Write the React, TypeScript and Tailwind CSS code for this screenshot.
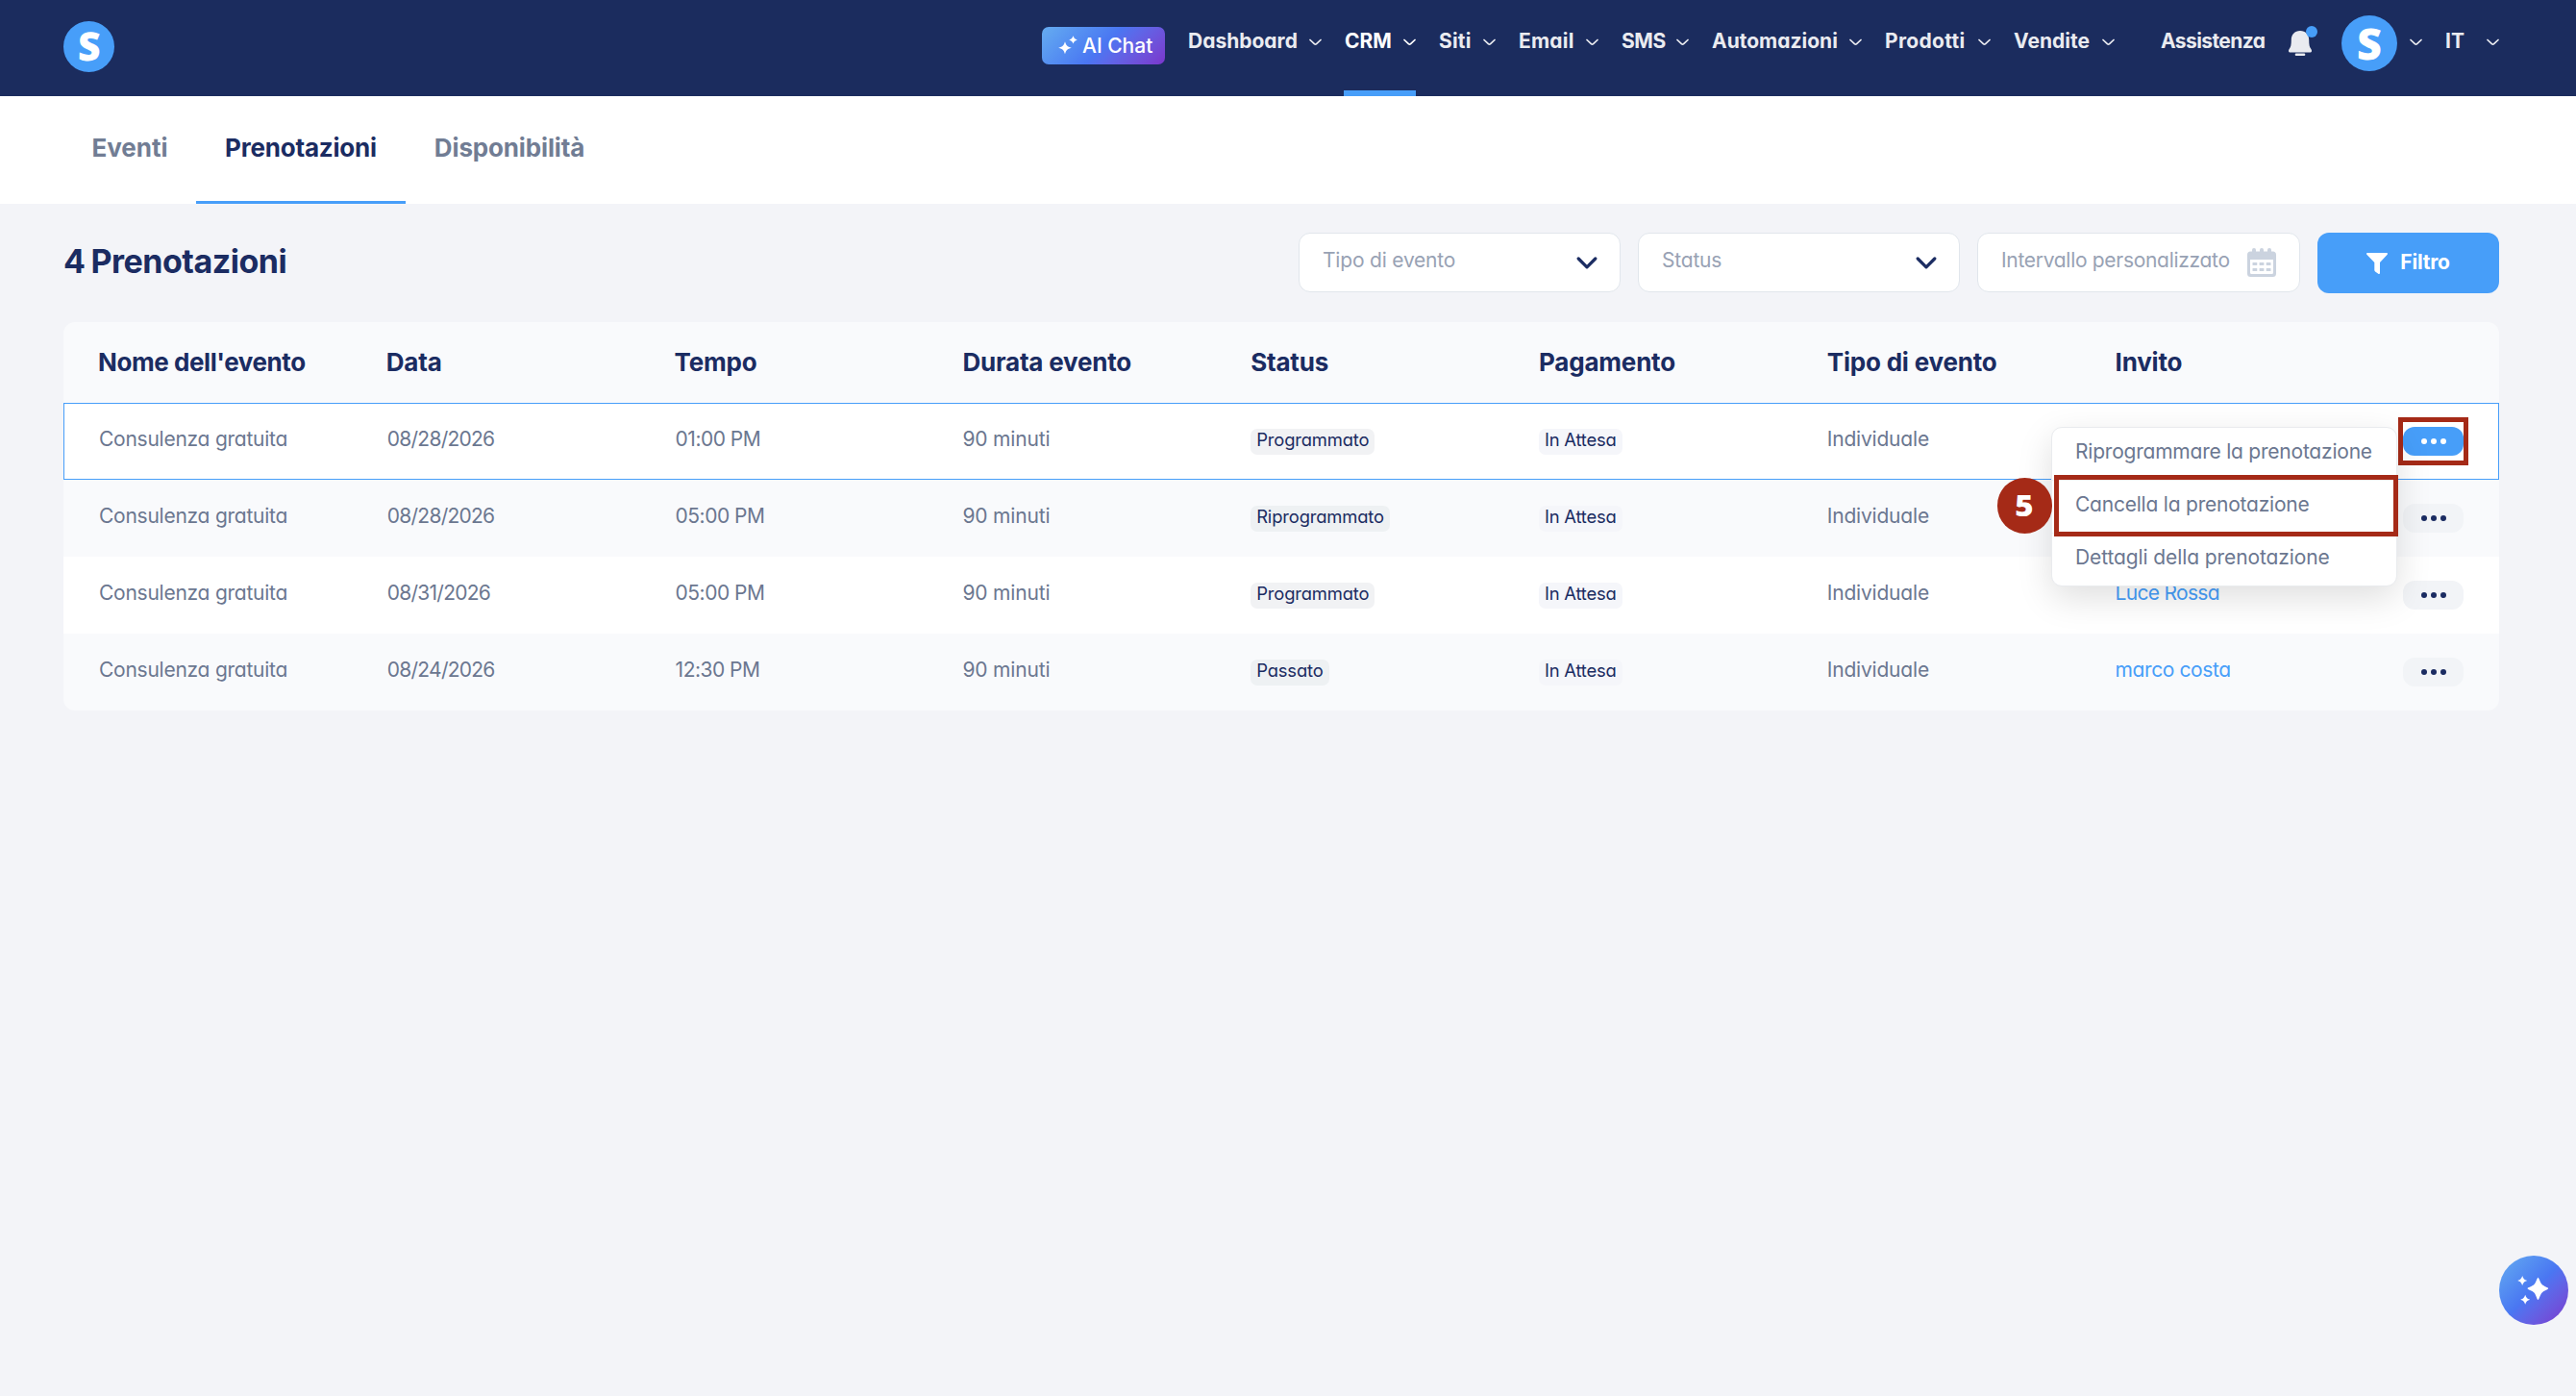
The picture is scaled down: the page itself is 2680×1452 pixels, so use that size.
import React from "react";
import clsx from "clsx";

const NAV_ITEMS = [
  { label: "Dashboard", className: "w-[140px]" },
  { label: "CRM", className: "w-[75px]", active: true },
  { label: "Siti", className: "w-[60px] tracking-[0.2px]" },
  { label: "Email", className: "w-[84px] tracking-[0.2px]" },
  { label: "SMS", className: "w-[71px] tracking-[-0.4px]" },
  { label: "Automazioni", className: "w-[157px]" },
  { label: "Prodotti", className: "w-[111px] tracking-[0.3px]" },
  { label: "Vendite", className: "w-[106px]" },
];

const COLUMNS = [
  "Nome dell'evento",
  "Data",
  "Tempo",
  "Durata evento",
  "Status",
  "Pagamento",
  "Tipo di evento",
  "Invito",
];

const BOOKINGS = [
  {
    id: 1,
    name: "Consulenza gratuita",
    date: "08/28/2026",
    time: "01:00 PM",
    duration: "90 minuti",
    status: "Programmato",
    payment: "In Attesa",
    type: "Individuale",
    guest: "",
  },
  {
    id: 2,
    name: "Consulenza gratuita",
    date: "08/28/2026",
    time: "05:00 PM",
    duration: "90 minuti",
    status: "Riprogrammato",
    payment: "In Attesa",
    type: "Individuale",
    guest: "",
  },
  {
    id: 3,
    name: "Consulenza gratuita",
    date: "08/31/2026",
    time: "05:00 PM",
    duration: "90 minuti",
    status: "Programmato",
    payment: "In Attesa",
    type: "Individuale",
    guest: "Luce Rossa",
  },
  {
    id: 4,
    name: "Consulenza gratuita",
    date: "08/24/2026",
    time: "12:30 PM",
    duration: "90 minuti",
    status: "Passato",
    payment: "In Attesa",
    type: "Individuale",
    guest: "marco costa",
  },
];

const NavChevron = () => (
  <svg className="mt-[3px] h-[8px] w-[13px] shrink-0" viewBox="0 0 13 8" fill="none">
    <path
      d="M1 1.5 5.4 5.7a1.6 1.6 0 0 0 2.2 0L12 1.5"
      stroke="currentColor"
      strokeWidth="1.7"
      strokeLinecap="round"
    />
  </svg>
);

const SelectChevron = () => (
  <svg className="h-[13px] w-[22px] shrink-0" viewBox="0 0 22 13" fill="none">
    <path
      d="M2.2 2 11 10.8 19.8 2"
      stroke="#1b2c62"
      strokeWidth="3.2"
      strokeLinecap="round"
      strokeLinejoin="round"
    />
  </svg>
);

const BellIcon = () => (
  <svg className="h-[26px] w-[24px]" viewBox="0 0 24 26" fill="currentColor">
    <path d="M12 0c-5.6 0-9.2 4-9.2 9.6 0 5-.6 7.600-2 9.200C-.6 20.600-.2 22.600 2 22.600h20c2.200 0 2.600-2 1.200-3.800-1.400-1.600-2-4.200-2-9.200C21.200 4 17.600 0 12 0Z" />
    <rect x="6.700" y="23.600" width="10.600" height="2.400" rx="1.200" />
  </svg>
);

const CalendarIcon = () => (
  <svg className="h-[30px] w-[30px] shrink-0" viewBox="0 0 30 30" fill="#cbd3df">
    <path
      fillRule="evenodd"
      d="M3.500 3.500h23A3.500 3.500 0 0 1 30 7v19.500a3.500 3.500 0 0 1-3.500 3.500h-23A3.500 3.500 0 0 1 0 26.500V7a3.500 3.500 0 0 1 3.500-3.500ZM3 12v13.500A1.500 1.500 0 0 0 4.500 27h21a1.500 1.500 0 0 0 1.500-1.500V12Z"
    />
    <rect x="5" y="0" width="4" height="7" rx="2" />
    <rect x="13" y="0" width="4" height="7" rx="2" />
    <rect x="21" y="0" width="4" height="7" rx="2" />
    {[5.5, 12.6, 19.7].map((x) => (
      <React.Fragment key={x}>
        <rect x={x} y="15" width="4.800" height="3" rx="0.600" />
        <rect x={x} y="21" width="4.800" height="3" rx="0.600" />
      </React.Fragment>
    ))}
  </svg>
);

const FunnelIcon = () => (
  <svg className="h-[22px] w-[22px]" viewBox="0 0 22 22" fill="currentColor">
    <path d="M1 0h20c1 0 1.300 1.100.7 1.800L14 10v11c0 .9-1 1.300-1.700.8l-3.200-2.300c-.5-.4-.8-.8-.8-1.400V10L.3 1.800C-.3 1.100 0 0 1 0Z" />
  </svg>
);

const SparkleSmall = () => (
  <svg className="h-[20px] w-[20px] overflow-visible" viewBox="0 0 20 20" fill="currentColor">
    <path d="M7 5.200c1.200 4 2.200 5.100 6.800 6.500-4.600 1.400-5.600 2.500-6.800 6.500-1.200-4-2.200-5.100-6.800-6.500C4.800 10.300 5.800 9.200 7 5.200Z" />
    <path d="M15.500-.8c.9 2.500 1.600 3.300 4.300 4.200-2.700.9-3.400 1.700-4.300 4.200-.9-2.500-1.600-3.300-4.300-4.200 2.700-.9 3.400-1.700 4.300-4.200Z" />
  </svg>
);

const SparkleLarge = () => (
  <svg className="mr-[3px] h-[32px] w-[34px]" viewBox="0 0 34 32" fill="currentColor">
    <path d="M22.500 2.700c.9 0 2.300 5.500 4.200 7.400 1.900 1.900 6.500 3.200 6.500 4.100 0 .9-4.600 2.300-6.500 4.200-1.900 1.900-3.300 7.600-4.200 7.600-.9 0-2.200-5.700-4.100-7.600-1.900-1.900-6.900-3.300-6.900-4.200 0-.9 5-2.200 6.900-4.100 1.900-1.900 3.200-7.400 4.100-7.400Z" />
    <path d="M6.200 1c1.100 3 1.800 3.900 4.900 5-3.100 1.100-3.800 2-4.900 5-1.100-3-1.800-3.900-4.900-5 3.100-1.100 3.800-2 4.900-5Z" />
    <path d="M9.200 20.700c1.100 3 1.800 3.900 4.900 5-3.100 1.100-3.800 2-4.900 5-1.100-3-1.800-3.900-4.900-5 3.100-1.100 3.800-2 4.900-5Z" />
  </svg>
);

const Header = () => (
  <header className="flex h-[100px] items-start justify-between bg-[#1b2c5e] pr-[80px] pl-[66px] text-[21px] font-bold text-[#eaebf0] [font-feature-settings:'cv11']">
    <div className="mt-[22px] flex h-[53px] w-[53px] items-center justify-center rounded-full bg-[#479ef9] pb-[2px]">
      <span className="-skew-x-1 font-['Open_Sans'] text-[41px] leading-none font-extrabold text-white">S</span>
    </div>

    <div className="flex items-start">
      <button className="mt-[28px] mr-[23px] flex h-[39px] w-[128px] items-center rounded-[7px] bg-linear-135 from-[#66acf0] via-[#4a76f2] to-[#7a35cc] pl-[17px] font-medium text-white [font-feature-settings:normal]">
        <SparkleSmall />
        <span className="ml-[5px]">AI Chat</span>
      </button>

      <nav className="flex gap-[23px]">
        {NAV_ITEMS.map((item) => (
          <a
            key={item.label}
            className={clsx(
              "relative flex h-[100px] items-center justify-between pb-[15px] pl-px",
              item.className,
              item.active && "pl-0 text-white"
            )}
          >
            {item.label}
            <NavChevron />
            {item.active && <span className="absolute inset-x-0 bottom-0 h-[6px] bg-[#479ef9]" />}
          </a>
        ))}
      </nav>

      <a className="ml-[48px] flex h-[85px] w-[109px] items-center tracking-[-0.6px]">Assistenza</a>
      <div className="relative mt-[32px] ml-[24px]">
        <BellIcon />
        <span className="absolute -top-[5px] -right-[6px] h-[12px] w-[12px] rounded-full bg-[#479ef9]" />
      </div>
      <div className="mt-[16px] ml-[31px] flex h-[58px] w-[58px] items-center justify-center rounded-full bg-[#479ef9] pb-[2px]">
        <span className="-skew-x-1 font-['Open_Sans'] text-[45px] leading-none font-extrabold text-white">S</span>
      </div>
      <div className="ml-[13px] flex h-[85px] items-center">
        <NavChevron />
      </div>
      <div className="ml-[24px] flex h-[85px] w-[56px] items-center justify-between">
        IT
        <NavChevron />
      </div>
    </div>
  </header>
);

const Tabs = () => (
  <div className="flex h-[112px] bg-white pl-[66px] text-[26px] font-bold text-[#717d94]">
    <a className="flex w-[138px] items-center justify-center pb-[5px]">Eventi</a>
    <a className="flex w-[218px] items-center justify-center border-b-3 border-[#479ef9] pb-[2px] tracking-[-0.2px] text-[#1b2c62]">
      Prenotazioni
    </a>
    <a className="flex w-[216px] items-center justify-center pb-[5px] tracking-[-0.15px]">Disponibilità</a>
  </div>
);

const Filters = () => (
  <div className="flex h-[63px] items-start gap-[18px] text-[21px] tracking-[-0.2px] text-[#98a2b4] [font-feature-settings:'cv11']">
    {["Tipo di evento", "Status"].map((label) => (
      <div
        key={label}
        className="flex h-[62px] w-[335px] items-center justify-between rounded-[12px] border border-[#e1e6ec] bg-white pr-[23px] pl-[24px]"
      >
        <span className="pb-[5px]">{label}</span>
        <SelectChevron />
      </div>
    ))}
    <div className="flex h-[62px] w-[336px] items-center justify-between rounded-[12px] border border-[#e1e6ec] bg-white pr-[24px] pl-[24px]">
      <span className="pb-[5px] tracking-[-0.3px]">Intervallo personalizzato</span>
      <CalendarIcon />
    </div>
    <button className="flex h-[63px] w-[189px] items-center justify-center gap-[13px] rounded-[12px] bg-[#479ef9] font-bold text-white">
      <FunnelIcon />
      <span className="pb-[2px]">Filtro</span>
    </button>
  </div>
);

const ActionsMenu = () => (
  <div className="absolute top-[24px] right-[105px] z-10 w-[360px] rounded-[11px] border border-[#e9ebee] bg-white tracking-[-0.22px] shadow-[0_12px_36px_rgba(0,0,0,0.13)]">
    <div className="flex h-[55px] items-center border-b border-[#f0f1f3] pb-[5px] pl-[24px]">
      Riprogrammare la prenotazione
    </div>
    <div className="relative flex h-[55px] items-center border-b border-[#f0f1f3] pb-[5px] pl-[24px]">
      Cancella la prenotazione
      {/* highlighted step */}
      <span className="absolute -top-[6px] -right-[2px] h-[64px] w-[358px] border-5 border-[#a52a17]" />
      <span className="absolute -top-[3px] -left-[57px] flex h-[58px] w-[57px] items-center justify-center rounded-full bg-[#a52a17] pr-[2px] pb-px font-['Open_Sans'] text-[30px] leading-none font-extrabold text-white">
        <span className="scale-x-110">5</span>
      </span>
    </div>
    <div className="flex h-[54px] items-center pb-[4px] pl-[24px] tracking-[-0.1px]">
      Dettagli della prenotazione
    </div>
  </div>
);

const Dots = () => (
  <svg className="h-[6px] w-[26px]" viewBox="0 0 26 6" fill="currentColor">
    <circle cx="3" cy="3" r="3" />
    <circle cx="13" cy="3" r="3" />
    <circle cx="23" cy="3" r="3" />
  </svg>
);

const Table = () => (
  <div className="mt-[30px] rounded-[12px] bg-[#f9fafc]">
    <div className="flex h-[84px] items-center pl-[36px] text-[26px] font-bold tracking-[-0.2px] text-[#1b2c62]">
      {COLUMNS.map((column, i) => (
        <div key={column} className={clsx("w-[299.8px] pb-px", i === 0 && "tracking-[-0.42px]")}>
          {column}
        </div>
      ))}
    </div>

    {BOOKINGS.map((booking, i) => {
      const isOpen = i === 0;

      return (
        <div
          key={booking.id}
          className={clsx(
            "relative flex h-[80px] items-center text-[21px] text-[#6b7790] [font-feature-settings:'cv11']",
            isOpen ? "border border-[#479ef9] bg-white pl-[35px]" : "pl-[36px]",
            i === 2 && "bg-white"
          )}
        >
          <div className="w-[299.8px] pb-[5px] pl-px tracking-[-0.25px]">{booking.name}</div>
          <div className="w-[299.8px] pb-[5px] pl-px tracking-[-0.75px]">{booking.date}</div>
          <div className="w-[299.8px] pb-[5px] pl-px tracking-[-0.5px]">{booking.time}</div>
          <div className="w-[299.8px] pb-[5px] tracking-[-0.15px]">{booking.duration}</div>
          <div className="flex w-[299.8px]">
            <span
              className={clsx(
                "flex h-[27px] items-center rounded-[7px] px-[6px] pb-[2px] text-[18.4px] tracking-[-0.15px] text-[#1b2c62]",
                i % 2 ? "bg-[#eef1f3]" : "bg-[#f1f2f4]"
              )}
            >
              {booking.status}
            </span>
          </div>
          <div className="flex w-[299.8px]">
            <span className="flex h-[27px] items-center rounded-[7px] bg-[#f5f6fa] px-[6px] pb-[2px] text-[18.4px] tracking-[-0.2px] text-[#1b2c62]">
              {booking.payment}
            </span>
          </div>
          <div className="w-[299.8px] pb-[5px] tracking-[-0.2px]">{booking.type}</div>
          <div
            className={clsx(
              "w-[299.8px] pb-[5px] text-[#479ef9]",
              i === 2 ? "tracking-[-0.7px]" : "tracking-[-0.4px]"
            )}
          >
            {booking.guest}
          </div>
          <button
            className={clsx(
              "relative flex h-[30px] w-[63px] items-center justify-center rounded-[12px]",
              isOpen ? "bg-[#479ef9] text-white" : "bg-[#f2f4f7] text-[#1b2c62]"
            )}
          >
            <Dots />
            {isOpen && (
              <span className="absolute -top-[10px] -left-[5px] h-[50px] w-[73px] border-5 border-[#a52a17]" />
            )}
          </button>
          {isOpen && <ActionsMenu />}
        </div>
      );
    })}
  </div>
);

export default function App() {
  return (
    <div className="h-[1452px] w-[2680px] bg-[#f3f4f8] font-['Inter',sans-serif]">
      <Header />
      <Tabs />
      <main className="pt-[30px] pr-[80px] pl-[66px]">
        <div className="flex items-start justify-between">
          <h1 className="flex h-[59px] items-center text-[34px] font-bold tracking-[-0.5px] text-[#1b2c62]">
            <span className="[word-spacing:-1.5px]">4 Prenotazioni</span>
          </h1>
          <Filters />
        </div>
        <Table />
      </main>
      <button className="fixed top-[1306px] left-[2600px] flex h-[72px] w-[72px] items-center justify-center rounded-full bg-linear-135 from-[#66acf0] via-[#4a76f2] to-[#7a35cc] text-white">
        <SparkleLarge />
      </button>
    </div>
  );
}
